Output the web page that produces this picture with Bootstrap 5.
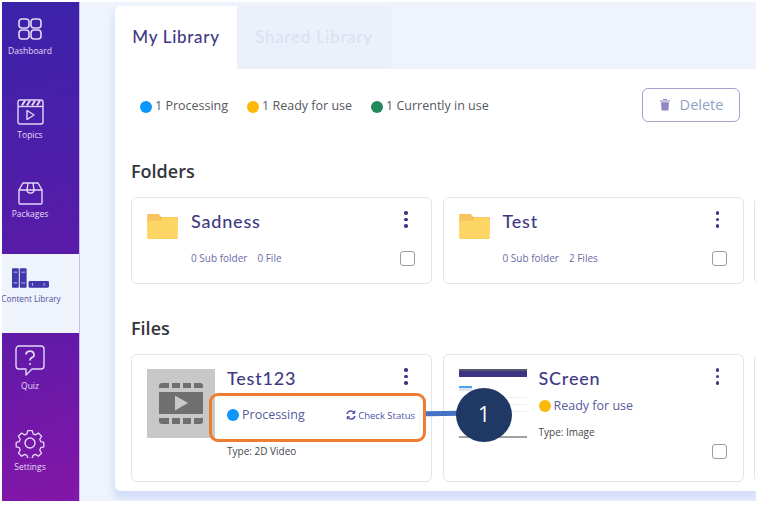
<!DOCTYPE html>
<html lang="en">
<head>
<meta charset="utf-8">
<title>Content Library</title>
<link href="https://cdn.jsdelivr.net/npm/bootstrap@5.3.0/dist/css/bootstrap.min.css" rel="stylesheet">
<style>
html,body{margin:0;height:505px;overflow:hidden;background:#fff;font-family:"Open Sans","Noto Sans",sans-serif}
.shell{width:754px;height:499px;margin:2px 0 0 2px;display:flex;background:#eef3fc;overflow:hidden}
.rail{width:78px;flex:none;display:flex;flex-direction:column;border-right:1px solid #c9bdea}
.rail-top{height:252px;background:linear-gradient(165deg,#3a23aa 0%,#5a1ba8 100%);display:flex;flex-direction:column}
.rail-mid{height:79px;background:#eef3fc;overflow:hidden}
.rail-bot{height:168px;background:linear-gradient(165deg,#5f1aa8 0%,#8416a8 100%);display:flex;flex-direction:column}
.rail-item{display:flex;flex-direction:column;align-items:center;padding-right:21px;font-size:8.5px;line-height:12px;color:#e6dcf8;white-space:nowrap}
.rail-item svg{display:block;flex:none}
.i-dash{height:84px;padding-top:16px}
.i-dash span{margin-top:5px}
.i-top{height:84px;padding-top:13px}
.i-top span{margin-top:4px}
.i-pack{height:84px;padding-top:12px}
.i-pack span{margin-top:3px}
.i-lib{padding-top:14px;padding-right:19px;color:#524ea3;font-size:8.2px}
.i-lib svg{margin-right:2px}
.i-lib span{margin-top:4px}
.i-quiz{height:82px;padding-top:12px}
.i-quiz span{margin-top:4px}
.i-set{padding-top:13px}
.i-set span{margin-top:3px}
.stage{flex:1;padding:4px 0 10px 35px;min-width:0}
.panel{height:100%;background:#fff;border-radius:6px 0 0 6px;box-shadow:0 7px 6px 2px #d5e0f8;display:flex;flex-direction:column;overflow:hidden}
.tabbar{display:flex;height:63px;background:#eef3fc;flex:none}
.tab-on,.tab-off{font-family:Lato,"Noto Sans",sans-serif;font-size:17px;letter-spacing:.7px;display:flex;padding-top:18px;justify-content:center;font-weight:500}
.tab-on{width:122px;background:#fff;color:#3f3a84;border-radius:6px 0 0 0}
.tab-off{width:154px;color:#dde1f1;background:#ebf0fa}
.legend{display:flex;align-items:center;gap:19px;padding:19px 16px 0 25px;height:56px;flex:none;font-size:12.5px;color:#55585f}
.legend>div{display:flex;align-items:center;gap:3px}
.dot{width:12px;height:12px;border-radius:50%;display:inline-block;flex:none}
.d-blue{background:#0d96fb}.d-yel{background:#fdb90a}.d-grn{background:#23895c}
.btn-del{margin-left:auto;margin-bottom:4px;width:98px;height:34px;border:1px solid #aaa0cf;border-radius:6px;background:#fff;color:#8fa2c5;font-size:14.5px;padding:0;display:flex;align-items:center;justify-content:center;gap:9px}
.sect{font-size:18px;line-height:20px;font-weight:600;color:#33363b;margin:36px 0 16px 16px}
.sect-files{margin-top:34px}
.f-row{display:flex;gap:10.5px;padding-left:16px;width:800px;flex:none}
.tile{width:301px;flex:none;background:#fff;border:1px solid #e3e4e6;border-radius:6px;display:flex;padding:12px 16px 0 15px}
.folder{height:87px}
.asset{height:128px}
.media-f{width:44px;flex:none;padding-top:3px}
.media-a{width:80px;flex:none;padding-top:2px}
.body-t{flex:1;min-width:0;display:flex;flex-direction:column}
.line-t{display:flex;align-items:center;justify-content:space-between}
.line-top{align-items:flex-start}
.t-name{font-family:Lato,"Noto Sans",sans-serif;font-size:18px;line-height:22px;letter-spacing:.8px;color:#3f3a84;font-weight:500;white-space:nowrap}
.t-meta{font-size:10px;line-height:15px;color:#6d6aa8;display:flex;gap:10px;white-space:nowrap}
.kebab{width:4px;margin:1px 7px 0 0;display:flex;flex-direction:column;gap:3px}
.kebab i{display:block;width:3.5px;height:3.5px;border-radius:50%;background:#3b3588}
.box{width:15px;height:15px;border:1.5px solid #9c9c9c;border-radius:3px;background:#fff;flex:none}
.mt-row{margin-top:19px}
.thumb{width:68px;height:69px;background:#c8c8c8;display:flex;align-items:center;justify-content:center}
.shot{background:#fff;display:block;position:relative;overflow:hidden}
.shot b{display:block;height:8px;background:#3d3484;border-top:2px solid #58566a}
.shot u{display:block;width:13px;height:5px;margin-top:9px;background:linear-gradient(#4ea3ee 0 2px,#dce6f3 2px)}
.shot em{display:block;height:1px;background:#f0f0f0;margin-top:6px}
.shot s{display:block;position:absolute;left:0;right:0;bottom:0;height:2px;background:#a2a2a2}
.status{display:flex;align-items:center;gap:3px;font-size:12.5px;line-height:18px;color:#565a9c;white-space:nowrap}
.t-type{font-size:10px;line-height:14px;color:#44464b;white-space:nowrap}
.check{font-size:9.5px;line-height:13px;color:#4d51ad;display:flex;align-items:center;gap:2px;white-space:nowrap}
.st-a{margin-top:17px}
.ty-a{margin-top:20px}
.st-b{margin-top:8px}
.ty-b{margin-top:10px}
.bx-b{margin-top:5px;align-self:flex-end}
.callout{position:absolute;left:209px;top:393px;width:217px;height:49px;border:3px solid #ed7d31;border-radius:9px;pointer-events:none}
.leader{position:absolute;left:426px;top:411px;width:36px;height:5px;background:#4472c4;transform:rotate(-1deg)}
.pin{position:absolute;left:456px;top:388px;width:56px;height:54px;border-radius:50%;background:#1f3864;color:#fff;font-size:21px;display:flex;align-items:center;justify-content:center}
</style>
</head>
<body>
<div class="shell">
  <nav class="rail">
    <div class="rail-top">
      <div class="rail-item i-dash">
        <svg width="24" height="22" viewBox="0 0 24 22" fill="none" stroke="#e2d8f7" stroke-width="1.6"><rect x="1" y="1" width="10" height="9" rx="3"/><rect x="13" y="1" width="10" height="9" rx="3"/><rect x="1" y="12" width="10" height="9" rx="3"/><rect x="13" y="12" width="10" height="9" rx="3"/></svg>
        <span>Dashboard</span>
      </div>
      <div class="rail-item i-top">
        <svg width="27" height="26" viewBox="0 0 27 26" fill="none" stroke="#e2d8f7" stroke-width="1.4"><rect x="1" y="1" width="25" height="24" rx="2"/><path d="M1 7.5h25"/><path d="M5 6.5l3-5M10 6.5l3-5M15 6.5l3-5M20 6.5l3-5" stroke-width="2"/><path d="M10 11.5l7 4.5-7 4.5z" stroke-linejoin="round"/></svg>
        <span>Topics</span>
      </div>
      <div class="rail-item i-pack">
        <svg width="25" height="23" viewBox="0 0 25 23" fill="none" stroke="#e2d8f7" stroke-width="1.4"><path d="M1 8h23v13a1 1 0 0 1-1 1H2a1 1 0 0 1-1-1z"/><path d="M1 8l4-7h15l4 7"/><path d="M10 1l-1 7c0 2 1 3 3.500 3s3.500-1 3.500-3l-1-7"/></svg>
        <span>Packages</span>
      </div>
    </div>
    <div class="rail-mid">
      <div class="rail-item i-lib">
        <svg width="37" height="21" viewBox="0 0 38 21" fill="#4139ab"><rect x="0" y="0" width="7" height="20" rx="1"/><rect x="8" y="0" width="7" height="20" rx="1"/><rect x="17" y="13" width="21" height="7" rx="1.500"/><path d="M1.500 4h4M9.500 4h4M1.500 15h4M9.500 15h4M21 15v3M33 15v3" stroke="#b9b6e6" stroke-width="1"/></svg>
        <span>Content Library</span>
      </div>
    </div>
    <div class="rail-bot">
      <div class="rail-item i-quiz">
        <svg width="30" height="31" viewBox="0 0 30 31" fill="none" stroke="#e2d8f7" stroke-width="1.4"><path d="M4 1h22a3 3 0 0 1 3 3v17a3 3 0 0 1-3 3H17l-6 6v-6H4a3 3 0 0 1-3-3V4a3 3 0 0 1 3-3z" stroke-linejoin="round"/><path d="M11 9.500a4 3.500 0 1 1 5.500 3.300c-1 .7-1.500 1.200-1.500 2.700" stroke-width="1.700"/><circle cx="15" cy="19" r="1" fill="#e2d8f7" stroke="none"/></svg>
        <span>Quiz</span>
      </div>
      <div class="rail-item i-set">
        <svg width="30" height="30" viewBox="0 0 30 30" fill="none" stroke="#e2d8f7" stroke-width="1.4"><path d="M12.500 1.500h5l.8 3.600 2.600 1.100 3.200-2 3.500 3.500-2 3.200 1.100 2.600 3.300.8v5l-3.300.8-1.100 2.600 2 3.200-3.500 3.500-3.200-2-2.600 1.100-.8 3.300h-5l-.8-3.300-2.600-1.100-3.200 2-3.500-3.500 2-3.200-1.100-2.600-3.300-.8v-5l3.300-.8 1.100-2.600-2-3.200 3.500-3.500 3.200 2 2.600-1.100z" transform="translate(1.200 1.200) scale(.92)" stroke-linejoin="round"/><circle cx="15" cy="15" r="5"/></svg>
        <span>Settings</span>
      </div>
    </div>
  </nav>
  <main class="stage">
    <div class="panel">
      <div class="tabbar"><div class="tab-on">My Library</div><div class="tab-off">Shared Library</div></div>
      <div class="legend">
        <div><i class="dot d-blue"></i>1 Processing</div>
        <div><i class="dot d-yel"></i>1 Ready for use</div>
        <div><i class="dot d-grn"></i>1 Currently in use</div>
        <button type="button" class="btn btn-del">
          <svg width="12" height="13" viewBox="0 0 12 13" fill="#8f86c2"><path d="M1 2.500h10v1H1zM4 1h4v1H4zM2 4.300h8l-.6 8.200H2.600z"/></svg>Delete
        </button>
      </div>
      <h2 class="sect">Folders</h2>
      <div class="f-row">
        <div class="tile folder">
          <div class="media-f"><svg width="31" height="25" viewBox="0 0 32 26"><path d="M0 1a1 1 0 0 1 1-1h11l3 3h16a1 1 0 0 1 1 1v4H0z" fill="#f8c35c"/><path d="M0 7h14l2-3h16v21a1 1 0 0 1-1 1H1a1 1 0 0 1-1-1z" fill="#fdd564"/></svg></div>
          <div class="body-t">
            <div class="line-t line-top"><div class="t-name">Sadness</div><div class="kebab"><i></i><i></i><i></i></div></div>
            <div class="line-t mt-row"><div class="t-meta"><span>0 Sub folder</span><span>0 File</span></div><div class="box"></div></div>
          </div>
        </div>
        <div class="tile folder">
          <div class="media-f"><svg width="31" height="25" viewBox="0 0 32 26"><path d="M0 1a1 1 0 0 1 1-1h11l3 3h16a1 1 0 0 1 1 1v4H0z" fill="#f8c35c"/><path d="M0 7h14l2-3h16v21a1 1 0 0 1-1 1H1a1 1 0 0 1-1-1z" fill="#fdd564"/></svg></div>
          <div class="body-t">
            <div class="line-t line-top"><div class="t-name">Test</div><div class="kebab"><i></i><i></i><i></i></div></div>
            <div class="line-t mt-row"><div class="t-meta"><span>0 Sub folder</span><span>2 Files</span></div><div class="box"></div></div>
          </div>
        </div>
        <div class="tile folder"></div>
      </div>
      <h2 class="sect sect-files">Files</h2>
      <div class="f-row">
        <div class="tile asset">
          <div class="media-a"><div class="thumb">
            <svg width="44" height="42" viewBox="0 0 44 42" fill="#6f6f6f"><path d="M3 0h7v5H0V3a3 3 0 0 1 3-3zM13 0h8v5h-8zM24 0h8v5h-8zM35 0h6a3 3 0 0 1 3 3v2h-9zM0 9h44v22H0zM0 35h10v6H3a3 3 0 0 1-3-3zM13 35h8v6h-8zM24 35h8v6h-8zM35 35h9v3a3 3 0 0 1-3 3h-6z"/><path d="M16 12.500l13 7.500-13 7.500z" fill="#c8c8c8"/></svg>
          </div></div>
          <div class="body-t">
            <div class="line-t line-top"><div class="t-name">Test123</div><div class="kebab"><i></i><i></i><i></i></div></div>
            <div class="line-t st-a"><div class="status"><i class="dot d-blue"></i>Processing</div><div class="check"><svg width="10" height="10" viewBox="0 0 10 10" fill="none" stroke="#4d51ad" stroke-width="1.500"><path d="M1 4a4 4 0 0 1 7-1.500M9 6a4 4 0 0 1-7 1.500"/><path d="M9 .5v3H6M1 9.500v-3h3" fill="#4d51ad" stroke-width=".6"/></svg>Check Status</div></div>
            <div class="t-type ty-a">Type: 2D Video</div>
          </div>
        </div>
        <div class="tile asset">
          <div class="media-a"><div class="thumb shot"><b></b><u></u><em></em><em></em><em></em><s></s></div></div>
          <div class="body-t">
            <div class="line-t line-top"><div class="t-name">SCreen</div><div class="kebab"><i></i><i></i><i></i></div></div>
            <div class="status st-b"><i class="dot d-yel"></i>Ready for use</div>
            <div class="t-type ty-b">Type: Image</div>
            <div class="box bx-b"></div>
          </div>
        </div>
        <div class="tile asset"></div>
      </div>
    </div>
  </main>
</div>
<div class="callout"></div>
<div class="leader"></div>
<div class="pin">1</div>
<script src="https://cdn.jsdelivr.net/npm/bootstrap@5.3.0/dist/js/bootstrap.bundle.min.js"></script>
</body>
</html>
